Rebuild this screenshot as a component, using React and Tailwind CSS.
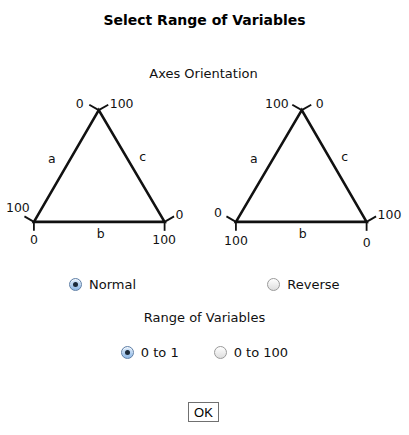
import React from "react";

const font = { fontFamily: "'DejaVu Sans', Verdana, sans-serif" };

function Tri({ v, labels }) {
  const [t, bl, br] = v;
  const tick = 1.8;
  return (
    <svg width="205" height="170" viewBox="0 0 205 170" className="block">
      <g stroke="#111" strokeLinecap="butt" fill="none">
        <polygon points={`${t[0]},${t[1]} ${bl[0]},${bl[1]} ${br[0]},${br[1]}`} strokeWidth="2.6" strokeLinejoin="miter" />
        <line x1={t[0]} y1={t[1]} x2={t[0] - 9.5} y2={t[1] - 5.5} strokeWidth={tick} />
        <line x1={t[0]} y1={t[1]} x2={t[0] + 9.5} y2={t[1] - 5.5} strokeWidth={tick} />
        <line x1={bl[0]} y1={bl[1]} x2={bl[0] - 9.5} y2={bl[1] - 5.5} strokeWidth={tick} />
        <line x1={bl[0]} y1={bl[1]} x2={bl[0]} y2={bl[1] + 9} strokeWidth={tick} />
        <line x1={br[0]} y1={br[1]} x2={br[0] + 9.5} y2={br[1] - 5.5} strokeWidth={tick} />
        <line x1={br[0]} y1={br[1]} x2={br[0]} y2={br[1] + 9} strokeWidth={tick} />
      </g>
      <g fill="#111" fontSize="12.5" style={font}>
        {labels.map((l, i) => (
          <text key={i} x={l[1]} y={l[2]} textAnchor={l[3] || "middle"}>
            {l[0]}
          </text>
        ))}
      </g>
    </svg>
  );
}

function Radio({ checked, label }) {
  return (
    <div className="flex items-center gap-[7px]">
      <span
        className={
          checked
            ? "w-[13px] h-[13px] rounded-full border border-[#5f7fa6] bg-linear-to-b from-[#dbeafa] to-[#8fb9e6] flex items-center justify-center shadow-[inset_0_1px_1px_rgba(255,255,255,0.8)]"
            : "w-[13px] h-[13px] rounded-full border border-[#9a9a9a] bg-linear-to-b from-[#ffffff] to-[#dedede] flex items-center justify-center"
        }
      >
        {checked && <span className="w-[5px] h-[5px] rounded-full bg-[#1b2a3a]" />}
      </span>
      <span className="text-[13px] text-[#111] leading-none">{label}</span>
    </div>
  );
}

export default function App() {
  return (
    <div className="w-[409px] h-[435px] bg-white flex flex-col" style={font}>
      <div className="h-[40px] flex items-center justify-center">
        <span className="text-[14px] font-bold text-black">Select Range of Variables</span>
      </div>
      <div className="h-[24px]" />
      <div className="h-[20px] flex items-center justify-center text-[13px] text-[#111] pr-[2px]">Axes Orientation</div>
      <div className="flex">
        <Tri
          v={[[99, 26], [34, 138], [165, 138]]}
          labels={[
            ["0", 80, 23.5],
            ["100", 110, 23.5, "start"],
            ["100", 6, 128.5, "start"],
            ["0", 34, 160.5],
            ["0", 176, 135.5, "start"],
            ["100", 164.5, 160.5],
            ["a", 52, 79],
            ["c", 143, 77],
            ["b", 101, 154],
          ]}
        />
        <Tri
          v={[[97, 26], [31, 138], [162, 138]]}
          labels={[
            ["100", 84, 23.5, "end"],
            ["0", 115, 23.5],
            ["0", 13, 133.5],
            ["100", 31, 161],
            ["100", 173, 135.5, "start"],
            ["0", 162, 163],
            ["a", 49, 79],
            ["c", 140, 77],
            ["b", 98, 154],
          ]}
        />
      </div>
      <div className="h-[20px]" />
      <div className="h-[20px] flex">
        <div className="w-[205px] flex items-center justify-center">
          <Radio checked label="Normal" />
        </div>
        <div className="w-[204px] flex items-center justify-center pr-[7px]">
          <Radio label="Reverse" />
        </div>
      </div>
      <div className="h-[14px]" />
      <div className="h-[20px] flex items-center justify-center text-[13px] text-[#111]">Range of Variables</div>
      <div className="h-[14px]" />
      <div className="h-[20px] flex items-center justify-center gap-[35px]">
        <Radio checked label="0 to 1" />
        <Radio label="0 to 100" />
      </div>
      <div className="h-[40px]" />
      <div className="flex justify-center">
        <button
          className="h-[20px] w-[31px] border border-[#707070] bg-white flex items-center justify-center text-[13px] text-black leading-none ml-[-2px]"
          style={{ fontFamily: "'Liberation Sans', Arial, sans-serif" }}
        >
          OK
        </button>
      </div>
    </div>
  );
}
